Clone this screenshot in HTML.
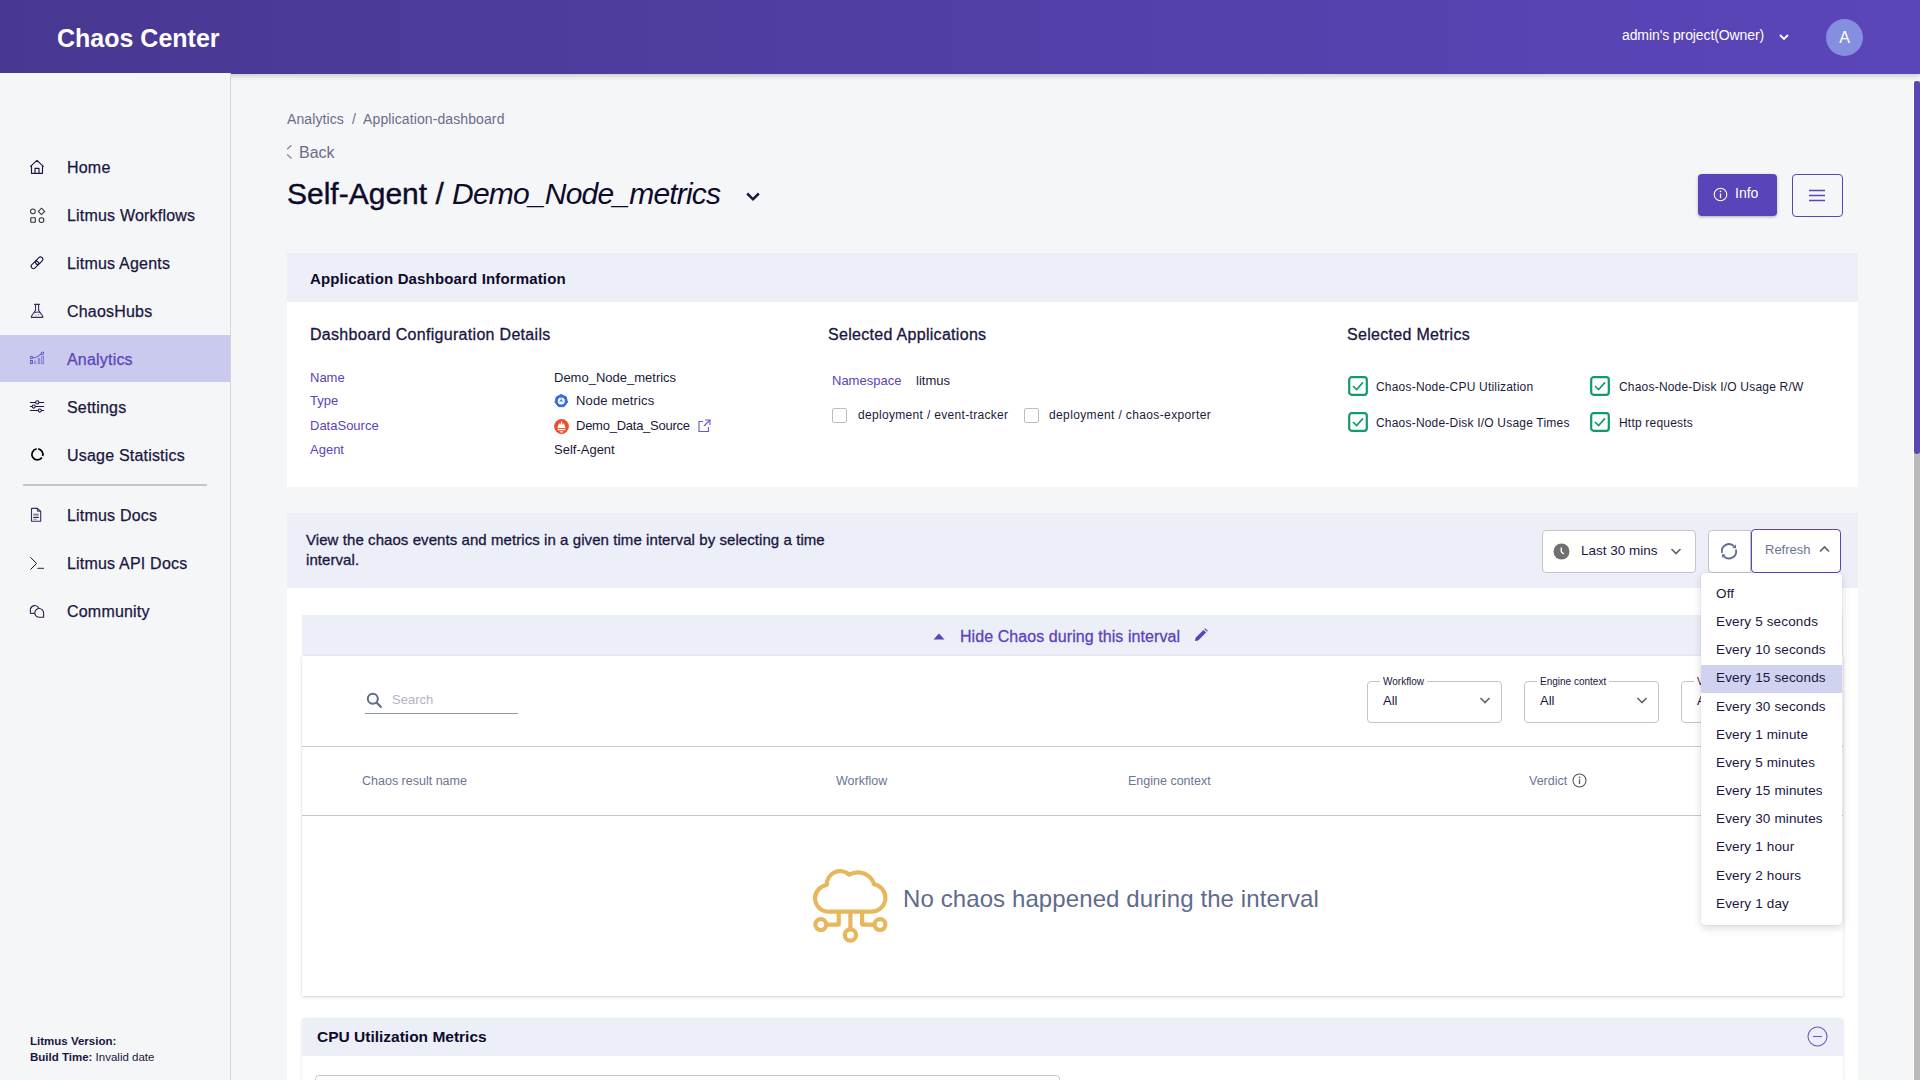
<!DOCTYPE html>
<html><head><meta charset="utf-8">
<style>
*{box-sizing:border-box;margin:0;padding:0}
html,body{width:1920px;height:1080px;overflow:hidden}
body{font-family:"Liberation Sans",sans-serif;background:#f5f6f8;position:relative;color:#1c1a3a}
.abs{position:absolute;white-space:nowrap}
#hdr{position:absolute;left:0;top:0;width:1920px;height:74px;background:linear-gradient(to right,#483891,#5b46ba);box-shadow:0 2px 5px rgba(0,0,0,.18);z-index:5}
#side{position:absolute;left:0;top:73px;width:231px;height:1007px;background:#f5f6f8;border-right:1px solid #d6d7db;z-index:6}
.nav{position:absolute;left:0;width:230px;height:47px}
.nav .ic{position:absolute;left:29px;top:16px;width:16px;height:16px}
.nav .tx{position:absolute;left:67px;top:14px;font-size:16px;color:#1a1640;white-space:nowrap;-webkit-text-stroke:0.25px;letter-spacing:0.2px}
.lbl{color:#5b44ba;font-size:13px}
.med{-webkit-text-stroke:0.3px}
.h3{letter-spacing:0.3px}
.val{color:#1c1a3a;font-size:13px}
</style></head><body>
<div id="hdr">
  <div class="abs" style="left:57px;top:24px;font-size:25px;font-weight:bold;color:#fff">Chaos Center</div>
  <div class="abs" style="left:1622px;top:27px;font-size:14px;letter-spacing:-0.1px;color:#fff">admin's project(Owner)</div>
  <svg class="abs" style="left:1778px;top:32px" width="12" height="10" viewBox="0 0 12 10"><path d="M2 3 L6 7 L10 3" stroke="#fff" stroke-width="1.8" fill="none"/></svg>
  <div class="abs" style="left:1826px;top:19px;width:37px;height:37px;border-radius:50%;background:#8490df;color:#fff;font-size:16px;text-align:center;line-height:38px">A</div>
</div>
<div id="side">
  <div class="abs" style="left:0;top:262px;width:230px;height:47px;background:#c9caee"></div>
  <div class="nav" style="top:72px"><div class="tx">Home</div></div>
  <div class="nav" style="top:120px"><div class="tx">Litmus Workflows</div></div>
  <div class="nav" style="top:168px"><div class="tx">Litmus Agents</div></div>
  <div class="nav" style="top:216px"><div class="tx">ChaosHubs</div></div>
  <div class="nav" style="top:264px"><div class="tx" style="color:#5b44ba">Analytics</div></div>
  <div class="nav" style="top:312px"><div class="tx">Settings</div></div>
  <div class="nav" style="top:360px"><div class="tx">Usage Statistics</div></div>
  <div class="abs" style="left:23px;top:411px;width:184px;height:2px;background:#c6c6c6"></div>
  <div class="nav" style="top:420px"><div class="tx">Litmus Docs</div></div>
  <div class="nav" style="top:468px"><div class="tx">Litmus API Docs</div></div>
  <div class="nav" style="top:516px"><div class="tx">Community</div></div>
  <div class="abs" style="left:30px;top:961.5px;font-size:11.5px;font-weight:bold;color:#1a1640">Litmus Version:</div>
  <div class="abs" style="left:30px;top:977.5px;font-size:11.5px;color:#1a1640"><b>Build Time:</b> Invalid date</div>
</div>
<div id="icons" style="position:absolute;left:0;top:0;z-index:7">
  <svg class="abs" style="left:26px;top:156px" width="22" height="22" viewBox="0 0 22 22"><path d="M4.3 10.6 L11 4.4 L17.6 10.6 M5.5 9.6 V17.3 H16.5 V9.6 M9 17.3 V12.4 H13 V17.3" fill="none" stroke="#1e1640" stroke-width="1.15" stroke-linejoin="round"/></svg>
  <svg class="abs" style="left:26px;top:205px" width="22" height="22" viewBox="0 0 22 22"><g fill="none" stroke="#333" stroke-width="1.05"><circle cx="6.9" cy="6.3" r="2.4"/><path d="M15.5 3.2 L18.7 6.4 L15.5 9.6 L12.3 6.4 Z"/><rect x="4.8" y="12.7" width="4.5" height="4.5" rx=".4" stroke-width="1.15"/><circle cx="15.5" cy="15.1" r="2.4"/></g></svg>
  <svg class="abs" style="left:26px;top:250px" width="22" height="22" viewBox="0 0 22 22"><g fill="none" stroke="#1e1640" stroke-width="1.1"><rect x="4.6" y="12.6" width="8.6" height="4.6" rx="2.3" transform="rotate(-45 8.9 14.9)"/><rect x="8.8" y="8.4" width="8.6" height="4.6" rx="2.3" transform="rotate(-45 13.1 10.7)"/></g></svg>
  <svg class="abs" style="left:26px;top:300px" width="22" height="22" viewBox="0 0 22 22"><g fill="none" stroke="#3a2d5c" stroke-width="1.1" stroke-linejoin="round"><path d="M8.1 4.4 H13.9 M9.5 4.4 V10.4 L5.4 16.2 V17.4 H16.8 V16.2 L12.6 10.4 V4.4"/><path d="M8.4 12.6 Q11 11.6 14 12.4" stroke-width="1"/></g><circle cx="12.6" cy="14.5" r=".6" fill="#6b5f88"/><path d="M9.3 15.5 L10.6 15.3" stroke="#8a80a0" stroke-width=".8"/></svg>
  <svg class="abs" style="left:26px;top:347px" width="22" height="22" viewBox="0 0 22 22"><g fill="none" stroke="#6a58c6" stroke-width="1.05"><rect x="4.6" y="13.4" width="1.8" height="3.2"/><rect x="8.4" y="14.2" width="1.4" height="2.4" stroke="#9a8fd8"/><rect x="12.3" y="11.6" width="1.4" height="5" stroke="#8a7ed0"/><rect x="15.7" y="9.4" width="1.8" height="7.2" stroke="#8a7ed0"/><path d="M6.4 10.5 L8.8 10.8 L12.2 9.1 L15.2 7"/><circle cx="5.4" cy="10.4" r="1.15"/><circle cx="16.5" cy="6.2" r="1.25"/></g></svg>
  <svg class="abs" style="left:26px;top:395px" width="22" height="22" viewBox="0 0 22 22"><g fill="none" stroke="#1e1640" stroke-width="1.05" stroke-linecap="round"><path d="M4.3 7.4 H17.7 M4.3 11.5 H17.7 M4.3 15.5 H17.7"/><circle cx="11.2" cy="7.4" r="1.6" fill="#f5f6f8"/><circle cx="7.7" cy="11.5" r="1.6" fill="#f5f6f8"/><circle cx="13.8" cy="15.5" r="1.6" fill="#f5f6f8"/></g></svg>
  <svg class="abs" style="left:26px;top:443px" width="22" height="22" viewBox="0 0 22 22"><path d="M12.17 5.95 A5.5 5.5 0 0 1 16.63 13.1 M15.9 14.55 A5.5 5.5 0 1 1 10.63 5.95" fill="none" stroke="#000" stroke-width="1.7"/></svg>
  <svg class="abs" style="left:26px;top:504px" width="22" height="22" viewBox="0 0 22 22"><g fill="none" stroke="#3a2d5c" stroke-width="1.1" stroke-linejoin="round"><path d="M5.5 4.4 H11.4 L14.7 7.5 V17.3 H5.5 Z"/><path d="M11.4 4.4 V7.2 H14.7" stroke-width="1"/></g><path d="M7.3 10.6 H12.8" stroke="#8a7f9f" stroke-width="2"/><path d="M7.3 13.4 H12.8" stroke="#1e1040" stroke-width="1.1"/><path d="M7.3 15.3 H10.8" stroke="#8a7f9f" stroke-width=".9"/></svg>
  <svg class="abs" style="left:26px;top:552px" width="22" height="22" viewBox="0 0 22 22"><path d="M4.5 5.4 L10.6 11.5 L4.5 17.5" fill="none" stroke="#111" stroke-width="1"/><path d="M11.8 16.4 H17.5" stroke="#555" stroke-width="1.2" stroke-linecap="round"/></svg>
  <svg class="abs" style="left:26px;top:600px" width="22" height="22" viewBox="0 0 22 22"><g fill="none" stroke="#2a1f4a" stroke-width="1.1" stroke-linejoin="round"><path d="M4.4 13.4 V9 A4.5 4.5 0 0 1 12.7 7.9"/><path d="M4.4 13.4 H8.8"/><path d="M17.6 13 V17.3 H13.3 A4.4 4.4 0 1 1 17.6 13 Z" fill="#f5f6f8"/></g></svg>
</div>
<div id="main">
  <div class="abs" style="left:287px;top:111px;font-size:14px;letter-spacing:0.1px;color:#6b6d8a">Analytics &nbsp;/&nbsp; Application-dashboard</div>
  <svg class="abs" style="left:284px;top:142px" width="10" height="20" viewBox="0 0 10 20"><path d="M3.1 7.2 L7.5 3.2 M3.1 12.6 L7.5 16.5" stroke="#8a8a8a" stroke-width="1.3" fill="none"/></svg>
  <div class="abs" style="left:299px;top:143.5px;font-size:16px;color:#6b6d8a">Back</div>
  <div class="abs" style="left:287px;top:177px;font-size:30px;color:#0e0a2a;-webkit-text-stroke:0.4px">Self-Agent / <i style="letter-spacing:-0.8px;-webkit-text-stroke:0">Demo_Node_metrics</i></div>
  <svg class="abs" style="left:744px;top:190px" width="18" height="12" viewBox="0 0 18 12"><path d="M3.2 3.5 L9 9.3 L14.8 3.5" stroke="#1a1640" stroke-width="2.5" fill="none"/></svg>
  <div class="abs" style="left:1698px;top:174px;width:79px;height:42px;background:#5b44ba;border-radius:4px;box-shadow:0 1px 3px rgba(0,0,0,.3)"></div>
  <svg class="abs" style="left:1713px;top:187px" width="15" height="15" viewBox="0 0 15 15"><circle cx="7.5" cy="7.5" r="6.3" stroke="#fff" stroke-width="1.1" fill="none"/><path d="M7.5 6.5 V11" stroke="#fff" stroke-width="1.2"/><circle cx="7.5" cy="4.4" r=".8" fill="#fff"/></svg>
  <div class="abs" style="left:1735px;top:185px;font-size:14px;color:#fff">Info</div>
  <div class="abs" style="left:1792px;top:174px;width:51px;height:43px;border:1px solid #5b44ba;border-radius:4px"></div>
  <svg class="abs" style="left:1808px;top:188px" width="18" height="15" viewBox="0 0 18 15"><path d="M1 2.5 H17 M1 7.5 H17 M1 12.5 H17" stroke="#5b44ba" stroke-width="1.5"/></svg>
  <div class="abs" style="left:287px;top:253px;width:1571px;height:49px;background:#eceff8"></div>
  <div class="abs" style="left:287px;top:302px;width:1571px;height:185px;background:#fff"></div>
  <div class="abs" style="left:310px;top:270px;font-size:15px;letter-spacing:0.15px;font-weight:bold;color:#0e0a2a">Application Dashboard Information</div>
  <div class="abs med" style="left:310px;top:326px;font-size:16px;color:#1a1640;letter-spacing:0.3px">Dashboard Configuration Details</div>
  <div class="abs med" style="left:828px;top:326px;font-size:16px;color:#1a1640;letter-spacing:0.3px">Selected Applications</div>
  <div class="abs med" style="left:1347px;top:326px;font-size:16px;color:#1a1640;letter-spacing:0.3px">Selected Metrics</div>
  <div class="abs lbl" style="left:310px;top:370px">Name</div>
  <div class="abs lbl" style="left:310px;top:393px">Type</div>
  <div class="abs lbl" style="left:310px;top:418px">DataSource</div>
  <div class="abs lbl" style="left:310px;top:442px">Agent</div>
  <div class="abs val" style="left:554px;top:370px">Demo_Node_metrics</div>
  <svg class="abs" style="left:554px;top:393px" width="15" height="15" viewBox="0 0 15 15"><path d="M7.25 1.50 L12.25 3.91 L13.49 9.32 L10.03 13.67 L4.47 13.67 L1.01 9.32 L2.25 3.91 Z" fill="#326ce5" stroke="#326ce5" stroke-width="1" stroke-linejoin="round"/><circle cx="7.25" cy="7.9" r="3.5" fill="#fff"/><circle cx="7.25" cy="7.6" r="1.1" fill="#326ce5"/><path d="M7.25 4.4 V6.4 M5 9.2 L6.3 8.2 M9.5 9.2 L8.2 8.2" stroke="#326ce5" stroke-width=".6"/></svg>
  <div class="abs val" style="left:576px;top:393px;letter-spacing:0.15px">Node metrics</div>
  <svg class="abs" style="left:554px;top:419px" width="15" height="15" viewBox="0 0 15 15"><circle cx="7.5" cy="7.5" r="7.4" fill="#e6522c"/><path d="M3.6 9.1 C3.6 6.5 5 5.5 5.3 4 C5.8 5 6 5.5 6.3 5.8 C6.8 4 7.2 2.5 7.5 1.4 C7.8 2.5 8.2 4 8.7 5.8 C9 5.5 9.2 5 9.7 4 C10 5.5 11.4 6.5 11.4 9.1 Z" fill="#fff"/><rect x="3.6" y="9.9" width="7.8" height="1.3" fill="#fff"/><rect x="5.8" y="12.3" width="3.4" height="1.1" fill="#fff"/></svg>
  <div class="abs val" style="left:576px;top:418px;letter-spacing:-0.25px">Demo_Data_Source</div>
  <svg class="abs" style="left:697px;top:419px" width="14" height="14" viewBox="0 0 14 14"><path d="M6 2.5 H2 V12.5 H11.5 V8" fill="none" stroke="#6a5bc8" stroke-width="1.15"/><path d="M8 1 H13 V6 M13 1 L7 7" fill="none" stroke="#6a5bc8" stroke-width="1.15"/></svg>
  <div class="abs val" style="left:554px;top:442px">Self-Agent</div>
  <div class="abs lbl" style="left:832px;top:373px">Namespace</div>
  <div class="abs val" style="left:916px;top:373px">litmus</div>
  <div class="abs" style="left:832px;top:408px;width:15px;height:15px;border:1.5px solid #bdbdbd;border-radius:2px"></div>
  <div class="abs val" style="left:858px;top:408px;font-size:12px;letter-spacing:0.32px">deployment / event-tracker</div>
  <div class="abs" style="left:1024px;top:408px;width:15px;height:15px;border:1.5px solid #bdbdbd;border-radius:2px"></div>
  <div class="abs val" style="left:1049px;top:408px;font-size:12px;letter-spacing:0.37px">deployment / chaos-exporter</div>
  <svg class="abs" style="left:1348px;top:376px" width="20" height="20" viewBox="0 0 20 20"><rect x="1.2" y="1.2" width="17.6" height="17.6" rx="2.5" fill="#fff" stroke="#109b67" stroke-width="2.2"/><path d="M5 10 L8.6 13.6 L15 6.4" fill="none" stroke="#109b67" stroke-width="1.6"/></svg>
  <svg class="abs" style="left:1590px;top:376px" width="20" height="20" viewBox="0 0 20 20"><rect x="1.2" y="1.2" width="17.6" height="17.6" rx="2.5" fill="#fff" stroke="#109b67" stroke-width="2.2"/><path d="M5 10 L8.6 13.6 L15 6.4" fill="none" stroke="#109b67" stroke-width="1.6"/></svg>
  <svg class="abs" style="left:1348px;top:412px" width="20" height="20" viewBox="0 0 20 20"><rect x="1.2" y="1.2" width="17.6" height="17.6" rx="2.5" fill="#fff" stroke="#109b67" stroke-width="2.2"/><path d="M5 10 L8.6 13.6 L15 6.4" fill="none" stroke="#109b67" stroke-width="1.6"/></svg>
  <svg class="abs" style="left:1590px;top:412px" width="20" height="20" viewBox="0 0 20 20"><rect x="1.2" y="1.2" width="17.6" height="17.6" rx="2.5" fill="#fff" stroke="#109b67" stroke-width="2.2"/><path d="M5 10 L8.6 13.6 L15 6.4" fill="none" stroke="#109b67" stroke-width="1.6"/></svg>
  <div class="abs val" style="left:1376px;top:380px;font-size:12px;letter-spacing:0.2px">Chaos-Node-CPU Utilization</div>
  <div class="abs val" style="left:1619px;top:380px;font-size:12px;letter-spacing:0.2px">Chaos-Node-Disk I/O Usage R/W</div>
  <div class="abs val" style="left:1376px;top:416px;font-size:12px;letter-spacing:0.2px">Chaos-Node-Disk I/O Usage Times</div>
  <div class="abs val" style="left:1619px;top:416px;font-size:12px;letter-spacing:0.2px">Http requests</div>
  <div class="abs" style="left:287px;top:513px;width:1571px;height:75px;background:#eceff8"></div>
  <div class="abs" style="left:287px;top:588px;width:1571px;height:492px;background:#fff"></div>
  <div class="abs med" style="left:306px;top:530px;font-size:15px;line-height:20px;color:#1a1640;letter-spacing:0.07px">View the chaos events and metrics in a given time interval by selecting a time<br>interval.</div>
  <div class="abs" style="left:1542px;top:530px;width:154px;height:43px;background:#fff;border:1px solid #c4c4c4;border-radius:4px"></div>
  <svg class="abs" style="left:1553px;top:543px" width="17" height="17" viewBox="0 0 17 17"><circle cx="8.5" cy="8.5" r="8" fill="#707070"/><path d="M8.3 4.5 V8.8 L10.8 11" stroke="#fff" stroke-width="1.4" fill="none"/></svg>
  <div class="abs" style="left:1581px;top:543px;font-size:13.5px;color:#1a1640">Last 30 mins</div>
  <svg class="abs" style="left:1670px;top:546px" width="12" height="10" viewBox="0 0 12 10"><path d="M1.5 3 L6 7.5 L10.5 3" stroke="#666" stroke-width="1.7" fill="none"/></svg>
  <div class="abs" style="left:1708px;top:530px;width:43px;height:43px;background:#fff;border:1px solid #c4c4c4;border-radius:4px 0 0 4px"></div>
  <svg class="abs" style="left:1719px;top:541px" width="20" height="20" viewBox="0 0 20 20"><g fill="none" stroke="#5e6b8d" stroke-width="1.8"><path d="M16.86 8.41 A7.1 7.1 0 0 1 4.98 15.27"/><path d="M3.14 12.09 A7.1 7.1 0 0 1 15.02 5.23"/></g><path d="M16.72 3.53 L13.32 6.93 L17.14 7.35 Z M3.28 16.97 L6.68 13.57 L2.86 13.15 Z" fill="#5e6b8d"/></svg>
  <div class="abs" style="left:1751px;top:529px;width:90px;height:44px;background:#fff;border:1.5px solid #5b44ba;border-radius:4px"></div>
  <div class="abs" style="left:1765px;top:542px;font-size:13px;color:#6b7594">Refresh</div>
  <svg class="abs" style="left:1818px;top:544px" width="13" height="10" viewBox="0 0 13 10"><path d="M2 7.5 L6.5 3 L11 7.5" stroke="#616161" stroke-width="1.7" fill="none"/></svg>

  <div class="abs" style="left:302px;top:615px;width:1541px;height:41px;background:#eceff8"></div>
  <svg class="abs" style="left:933px;top:632px" width="12" height="8" viewBox="0 0 12 8"><path d="M0.5 7.5 L6 1.5 L11.5 7.5 Z" fill="#5b44ba"/></svg>
  <div class="abs med" style="left:960px;top:628px;font-size:16px;letter-spacing:0.07px;color:#5b44ba">Hide Chaos during this interval</div>
  <svg class="abs" style="left:1194px;top:628px" width="14" height="14" viewBox="0 0 14 14"><path d="M1 13 L1.6 9.8 L9.5 1.9 L12.1 4.5 L4.2 12.4 Z M10.3 1.1 L11.2 0.2 L13.8 2.8 L12.9 3.7 Z" fill="#5b44ba"/></svg>
  <div class="abs" style="left:302px;top:656px;width:1541px;height:340px;background:#fff;box-shadow:0 1px 3px rgba(0,0,0,.18)"></div>
  <svg class="abs" style="left:366px;top:692px" width="17" height="17" viewBox="0 0 17 17"><circle cx="6.8" cy="6.8" r="5" stroke="#5e6b8d" stroke-width="2" fill="none"/><path d="M10.5 10.5 L15.5 15.5" stroke="#5e6b8d" stroke-width="2.2"/></svg>
  <div class="abs" style="left:392px;top:692px;font-size:13px;color:#b0b4c6">Search</div>
  <div class="abs" style="left:365px;top:713px;width:153px;height:1px;background:#8f94a8"></div>
  <div class="abs" style="left:1367px;top:681px;width:135px;height:42px;border:1px solid #c4c4c4;border-radius:4px"></div>
  <div class="abs" style="left:1380px;top:675.5px;padding:0 3px;background:#fff;font-size:10px;color:#1a1640">Workflow</div>
  <div class="abs" style="left:1383px;top:693px;font-size:13px;color:#1a1640">All</div>
  <svg class="abs" style="left:1479px;top:695px" width="12" height="10" viewBox="0 0 12 10"><path d="M1.5 3 L6 7.5 L10.5 3" stroke="#666" stroke-width="1.7" fill="none"/></svg>
  <div class="abs" style="left:1524px;top:681px;width:135px;height:42px;border:1px solid #c4c4c4;border-radius:4px"></div>
  <div class="abs" style="left:1537px;top:675.5px;padding:0 3px;background:#fff;font-size:10px;color:#1a1640">Engine context</div>
  <div class="abs" style="left:1540px;top:693px;font-size:13px;color:#1a1640">All</div>
  <svg class="abs" style="left:1636px;top:695px" width="12" height="10" viewBox="0 0 12 10"><path d="M1.5 3 L6 7.5 L10.5 3" stroke="#666" stroke-width="1.7" fill="none"/></svg>
  <div class="abs" style="left:1681px;top:681px;width:135px;height:42px;border:1px solid #c4c4c4;border-radius:4px"></div>
  <div class="abs" style="left:1694px;top:675.5px;padding:0 3px;background:#fff;font-size:10px;color:#1a1640">Verdict</div>
  <div class="abs" style="left:1697px;top:693px;font-size:13px;color:#1a1640">All</div>
  <svg class="abs" style="left:1793px;top:695px" width="12" height="10" viewBox="0 0 12 10"><path d="M1.5 3 L6 7.5 L10.5 3" stroke="#666" stroke-width="1.7" fill="none"/></svg>

  <div class="abs" style="left:302px;top:746px;width:1541px;height:1px;background:#c8c8c8"></div>
  <div class="abs" style="left:302px;top:815px;width:1541px;height:1px;background:#c8c8c8"></div>
  <div class="abs" style="left:362px;top:774px;font-size:12.5px;color:#6b7594">Chaos result name</div>
  <div class="abs" style="left:836px;top:774px;font-size:12.5px;color:#6b7594">Workflow</div>
  <div class="abs" style="left:1128px;top:774px;font-size:12.5px;color:#6b7594">Engine context</div>
  <div class="abs" style="left:1529px;top:774px;font-size:12.5px;color:#6b7594">Verdict</div>
  <svg class="abs" style="left:1572px;top:773px" width="15" height="15" viewBox="0 0 15 15"><circle cx="7.5" cy="7.5" r="6.5" stroke="#555" stroke-width="1.1" fill="none"/><path d="M7.5 6.3 V11" stroke="#555" stroke-width="1.3"/><circle cx="7.5" cy="4.3" r=".85" fill="#555"/></svg>
  <svg class="abs" style="left:805px;top:860px" width="90" height="90" viewBox="0 0 90 90"><g fill="none" stroke="#e8b75c" stroke-width="4.2" stroke-linejoin="round"><path d="M24.2 51.7 A13.8 13.8 0 0 1 10 38.2 A13.8 13.8 0 0 1 21.7 25 A13.5 13.5 0 0 1 44.2 14.6 A17.5 17.5 0 0 1 69.2 24.2 A14 14 0 0 1 80.4 38.2 A14 14 0 0 1 65.8 51.7 Z"/><path d="M33.75 51.7 V64.6 H21.5 M45.4 51.7 V69.5 M57.1 51.7 V64.6 H69.3"/><circle cx="15.8" cy="64.6" r="5.4"/><circle cx="45.4" cy="75" r="5.6"/><circle cx="75" cy="64.6" r="5.4"/></g></svg>
  <div class="abs" style="left:903px;top:885px;font-size:24px;letter-spacing:0.1px;color:#5e6b8d">No chaos happened during the interval</div>

  <div class="abs" style="left:302px;top:1018px;width:1541px;height:62px;background:#fff;box-shadow:0 1px 3px rgba(0,0,0,.15);border-radius:3px 3px 0 0"></div>
  <div class="abs" style="left:302px;top:1018px;width:1541px;height:38px;background:#eceff8;border-radius:3px 3px 0 0"></div>
  <div class="abs" style="left:317px;top:1028px;font-size:15.5px;font-weight:bold;color:#0e0a2a">CPU Utilization Metrics</div>
  <svg class="abs" style="left:1807px;top:1026px" width="21" height="21" viewBox="0 0 21 21"><circle cx="10.5" cy="10.5" r="9.5" stroke="#6a5bc8" stroke-width="1.1" fill="none"/><path d="M6 10.5 H15" stroke="#6a5bc8" stroke-width="1.1"/></svg>
  <div class="abs" style="left:315px;top:1075px;width:745px;height:20px;border:1px solid #c8c8c8;border-radius:4px"></div>

  <div class="abs" style="left:1701px;top:573px;width:141px;height:352px;background:#fff;border-radius:4px;box-shadow:0 3px 8px rgba(0,0,0,.15),0 0 1px rgba(0,0,0,.2)"></div>
  <div class="abs" style="left:1701px;top:665px;width:141px;height:28px;background:#d0d2f0"></div>
  <div class="abs" style="left:1716px;top:586.00px;font-size:13.5px;letter-spacing:0.15px;color:#1a1640">Off</div>
  <div class="abs" style="left:1716px;top:614.15px;font-size:13.5px;letter-spacing:0.15px;color:#1a1640">Every 5 seconds</div>
  <div class="abs" style="left:1716px;top:642.30px;font-size:13.5px;letter-spacing:0.15px;color:#1a1640">Every 10 seconds</div>
  <div class="abs" style="left:1716px;top:670.45px;font-size:13.5px;letter-spacing:0.15px;color:#1a1640">Every 15 seconds</div>
  <div class="abs" style="left:1716px;top:698.60px;font-size:13.5px;letter-spacing:0.15px;color:#1a1640">Every 30 seconds</div>
  <div class="abs" style="left:1716px;top:726.75px;font-size:13.5px;letter-spacing:0.15px;color:#1a1640">Every 1 minute</div>
  <div class="abs" style="left:1716px;top:754.90px;font-size:13.5px;letter-spacing:0.15px;color:#1a1640">Every 5 minutes</div>
  <div class="abs" style="left:1716px;top:783.05px;font-size:13.5px;letter-spacing:0.15px;color:#1a1640">Every 15 minutes</div>
  <div class="abs" style="left:1716px;top:811.20px;font-size:13.5px;letter-spacing:0.15px;color:#1a1640">Every 30 minutes</div>
  <div class="abs" style="left:1716px;top:839.35px;font-size:13.5px;letter-spacing:0.15px;color:#1a1640">Every 1 hour</div>
  <div class="abs" style="left:1716px;top:867.50px;font-size:13.5px;letter-spacing:0.15px;color:#1a1640">Every 2 hours</div>
  <div class="abs" style="left:1716px;top:895.65px;font-size:13.5px;letter-spacing:0.15px;color:#1a1640">Every 1 day</div>

  <div class="abs" style="left:1913px;top:81px;width:7px;height:999px;background:#bababa;border-left:1px solid #fff"></div>
  <div class="abs" style="left:1914px;top:81px;width:6px;height:373px;background:#5a46b6;border-radius:3px 3px 3px 3px"></div>
</div>
</body></html>
